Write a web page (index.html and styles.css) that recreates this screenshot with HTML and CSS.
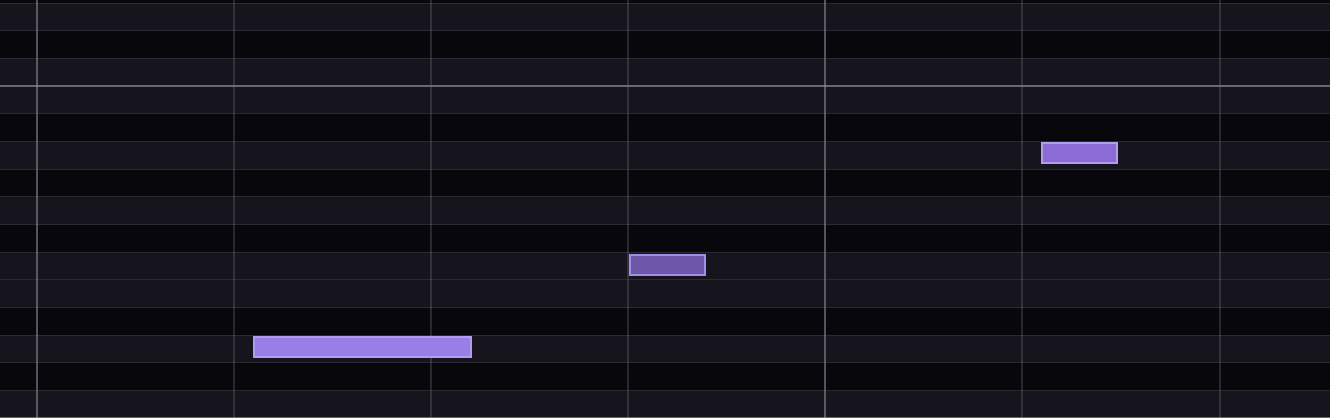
FILE: index.html
```html
<!DOCTYPE html>
<html lang="en">
<head>
    <meta charset="UTF-8">
    <meta name="viewport" content="width=device-width, initial-scale=1.0">
    <title>Piano Roll</title>
    <link rel="stylesheet" href="styles.css">
</head>
<body>
    <div class="roll">
        <div class="keys">
            <div class="lane black"></div>      <!-- D# -->
            <div class="lane"></div>            <!-- D -->
            <div class="lane black"></div>      <!-- C# -->
            <div class="lane octave"></div>     <!-- C -->
            <div class="lane"></div>            <!-- B -->
            <div class="lane black"></div>      <!-- A# -->
            <div class="lane"></div>            <!-- A -->
            <div class="lane black"></div>      <!-- G# -->
            <div class="lane"></div>            <!-- G -->
            <div class="lane black"></div>      <!-- F# -->
            <div class="lane"></div>            <!-- F -->
            <div class="lane"></div>            <!-- E -->
            <div class="lane black"></div>      <!-- D# -->
            <div class="lane"></div>            <!-- D -->
            <div class="lane black"></div>      <!-- C# -->
            <div class="lane octave"></div>     <!-- C -->
        </div>

        <div class="beats">
            <div class="beat bar"></div>
            <div class="beat"></div>
            <div class="beat"></div>
            <div class="beat"></div>
            <div class="beat bar"></div>
            <div class="beat"></div>
            <div class="beat"></div>
        </div>

        <div class="notes">
            <div class="note" style="left: 253px; top: 336px; width: 219px;"></div>
            <div class="note muted" style="left: 629px; top: 254px; width: 77px;"></div>
            <div class="note mid" style="left: 1041px; top: 142px; width: 77px;"></div>
        </div>
    </div>
</body>
</html>
```

FILE: styles.css
```css
html, body {
    margin: 0;
    height: 100%;
    background-color: #08070c;
    overflow: hidden;
}
.roll {
    position: relative;
    height: 100vh;
    overflow: hidden;
}
.keys {
    display: flex;
    flex-direction: column;
    margin-top: -24.2px; /* scrolled so D sits at the top */
}
.lane {
    height: 26.7px;
    flex: none;
    background-color: #16151d;
    border-bottom: 1px solid #2b2a32;
}
.lane.black {
    background-color: #08070c;
}
.lane.octave {
    height: 25.7px;
    border-bottom: 2px solid #68676e;
}
.beats {
    position: absolute;
    inset: 0;
    display: flex;
    padding-left: 36px;
    pointer-events: none;
}
.beat {
    flex: none;
    width: 195.1px;
    border-left: 2px solid rgba(120, 118, 130, 0.3);
}
.beat.bar {
    border-left-color: rgba(150, 148, 158, 0.55);
}
.notes {
    position: absolute;
    inset: 0;
}
.note {
    position: absolute;
    height: 22px;
    box-sizing: border-box;
    background-color: #9a7ee8;
    border: 2px solid #b29bf3;
}
.note.mid {
    background-color: #8b6cd6;
    border-color: #b39df0;
}
.note.muted {
    background-color: #6d57a8;
    border-color: #a48de6;
}
```
